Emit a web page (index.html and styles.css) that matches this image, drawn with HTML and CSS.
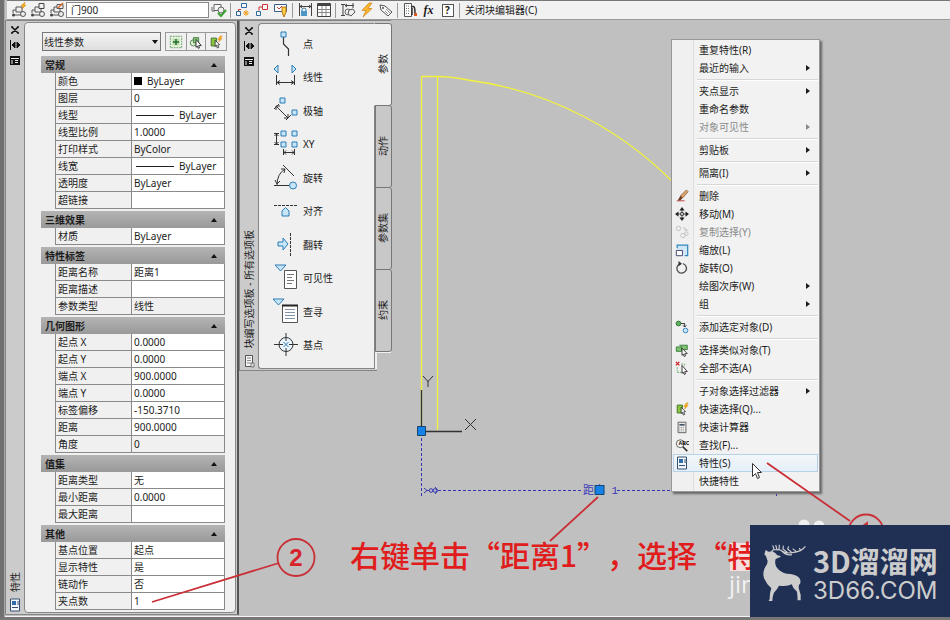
FILE: index.html
```html
<!DOCTYPE html>
<html lang="zh-CN">
<head>
<meta charset="utf-8">
<title>块编辑器</title>
<link rel="stylesheet" href="styles.css">
</head>
<body>
<svg class="defs" aria-hidden="true">
  <symbol id="i-pin" viewBox="0 0 12 12"><path d="M1.500 1v10M3 6h3M6 3L3 6l3 3zM8 3l3 3-3 3z" fill="#111" stroke="#111"/></symbol>
  <symbol id="i-close" viewBox="0 0 12 12"><path d="M3 3l6 6M9 3L3 9M2 3h2M8 3h2M2 9h2M8 9h2" fill="none" stroke="#111" stroke-width="1.600"/></symbol>
  <symbol id="i-menu" viewBox="0 0 12 12"><path d="M1 2h10v9H1z" fill="#111"/><path d="M2 4.500h8M3 6v4M6 6.500h3M6 8.500h3" stroke="#eee"/></symbol>
  <symbol id="i-props" viewBox="0 0 12 14"><path d="M1.500 1h9v12h-9z" fill="#f4f8fc" stroke="#34506e"/><path d="M3 3h4v4H3z" fill="#2f6ca8"/><path d="M8 4h2M8 6h2M3 9.500h6" stroke="#34506e"/></symbol>
  <symbol id="i-qselect" viewBox="0 0 16 16"><path d="M2.500 3.500h6v9h-6z" fill="#8cc63f" stroke="#3a6d20"/><path d="M7 6l5 5-2 .3 1 3-1.500.5-1-3L7 13z" fill="#fff" stroke="#222" stroke-width=".9"/><path d="M13 1l-3 4h2l-1 3 4-4h-2l2-3z" fill="#ffb21a" stroke="#c97a00" stroke-width=".5"/></symbol>
  <symbol id="i-block" viewBox="0 0 16 16"><path d="M5 5h6v5H5zM2 11v-3h3M2 13h9" fill="none" stroke="#555"/><circle cx="12" cy="12" r="2.500" fill="#eee" stroke="#555"/><circle cx="2.500" cy="13" r="1.500" fill="#444"/></symbol>
  <symbol id="i-bolt" viewBox="0 0 16 16"><path d="M10 1L3 8.500h4L4 15l9-8.500H9L13 1z" fill="#ffb62e" stroke="#c78212" stroke-width=".7"/></symbol>
  <symbol id="i-tag" viewBox="0 0 16 16"><path d="M2 3l5 1 7 6-4 4-7-6z" fill="#f8f8f8" stroke="#555"/><circle cx="5" cy="6" r="1" fill="#555"/><path d="M8 7l4 4M7 9l3 3" stroke="#999"/></symbol>
</svg>

<div class="app">
  <svg class="drawing" aria-hidden="true">
    <g fill="none" stroke="#f2f23c" stroke-width="1.300">
      <path d="M421.500 76.500V430M437.500 77V430M421.500 76.500H437"/>
      <path d="M437 76.500Q451 76.500 468 80A354 354 0 0 1 775 431"/>
    </g>
    <g fill="none" stroke="#333">
      <path d="M421.500 390V427M426 431.500H462" stroke-width="1.300"/>
      <path d="M423 376l5 5.500 5-5.500M428 381v6M465 419l11 11M476 419l-11 11"/>
    </g>
    <g fill="none" stroke="#3434b4">
      <path d="M421.500 438V496M438 490.500H582M617 490.500H776M776.500 484V496" stroke-dasharray="3 2"/>
      <path d="M424 488l3 2.500-3 2.500M427 490.500h2M435 487l3 3.500-3 3.500"/><circle cx="431" cy="490.500" r="1.800"/><circle cx="435" cy="490.500" r="1.800"/>
    </g>
    <text x="583" y="494" class="dim">距离 1</text>
    <g fill="#1482e6" stroke="#17456f"><path d="M417.500 426.500h8v9h-8zM595 485.500h9v9h-9z"/></g>
  </svg>

  <header class="toolbar">
    <button aria-label="插入块"><svg viewBox="0 0 16 16"><use href="#i-block"/><path d="M14 0l-4 4h2l-1 3 4-4h-2z" fill="#ffb21a" stroke="#c98000" stroke-width=".5"/></svg></button>
    <button aria-label="编辑块"><svg viewBox="0 0 16 16"><use href="#i-block"/><path d="M9 1.500h5v5H9z" fill="#eee" stroke="#444"/></svg></button>
    <button aria-label="保存块"><svg viewBox="0 0 16 16"><use href="#i-block"/><path d="M8 2.500h6v4H8z" fill="#eee" stroke="#555"/><path d="M9 6l5-5" stroke="#e06b25" stroke-width="1.500"/></svg></button>
    <input class="block-name" aria-label="块名" value="门900">
    <button aria-label="测试块"><svg viewBox="0 0 16 16"><path d="M3 2.500h7v6H3zM1 5v4h3" fill="#f8f8f8" stroke="#666"/><circle cx="10" cy="8" r="3" fill="#eee" stroke="#666"/><path d="M7 11l3 3 5-6" fill="none" stroke="#39a131" stroke-width="2"/></svg></button>
    <hr>
    <button aria-label="自动约束"><svg viewBox="0 0 16 16"><path d="M6.500 1.500h5v4h-5zM1.500 9.500h4v4h-4z" fill="#eef6ff" stroke="#346a9a"/><path d="M6 7.500H3.500V9" fill="none" stroke="#c33"/><path d="M11 8v6M8 11h6M9 9l4 4M13 9l-4 4" stroke="#f0a020"/></svg></button>
    <button aria-label="约束"><svg viewBox="0 0 16 16"><path d="M8.500 2.500h5v5h-5z" fill="#fff" stroke="#c33"/><path d="M2.500 9.500h4v4h-4z" fill="#eef6ff" stroke="#346a9a"/><path d="M5 8.500V5h3" fill="none" stroke="#c33"/></svg></button>
    <button aria-label="显示约束"><svg viewBox="0 0 16 16"><path d="M1.500 2.500h12v7h-12z" fill="#fff" stroke="#345e88"/><path d="M4 5l2 2 3-3" fill="none" stroke="#b44"/><path d="M9 5h4v5l-2 5-2-5z" fill="#ffd24a" stroke="#b87816"/></svg></button>
    <hr>
    <button aria-label="参数约束"><svg viewBox="0 0 16 16"><path d="M2.500 1v13M14.500 1v13M3 4.500h11M5 3L3 4.500 5 6M12 3l2 1.500L12 6" fill="none" stroke="#444"/><path d="M5 9.500V8a2 2 0 0 1 4 0v1.500" fill="none" stroke="#357aa8"/><path d="M4 9h6v5H4z" fill="#4b96c6"/></svg></button>
    <button aria-label="块表"><svg viewBox="0 0 16 16"><path d="M1.500 1.500h13v13h-13z" fill="#fff" stroke="#444"/><path d="M2 3h12" stroke="#444" stroke-width="2"/><path d="M2 7.500h12M2 10.500h12M6 4v10M10 4v10" stroke="#888"/></svg></button>
    <hr>
    <button aria-label="参数"><svg viewBox="0 0 16 16"><path d="M1 2.500h4M3 2.500v11M1 13.500h4M5 3.500h9M7 2L5 3.500 7 5M13 1v5" fill="none" stroke="#444"/><circle cx="8" cy="10" r="3" fill="#eee" stroke="#666"/><path d="M9 8l4-1 2 3-4 4-3-2z" fill="#eee" stroke="#555"/></svg></button>
    <button aria-label="动作"><svg viewBox="0 0 16 16"><use href="#i-bolt"/></svg></button>
    <button aria-label="属性定义"><svg viewBox="0 0 16 16"><use href="#i-tag"/></svg></button>
    <hr>
    <button aria-label="编写选项板"><svg viewBox="0 0 16 16"><path d="M2.500 1.500h7v13h-7z" fill="#fff" stroke="#555"/><path d="M4 4h4M4 6.500h4M4 9h4M4 11.500h4" stroke="#777" stroke-dasharray="1 1"/><path d="M9 5c4-2 4 2 4 7M10 6v7" fill="none" stroke="#333" stroke-width="1.500"/><path d="M12 11h3v3h-3z" fill="#d55a25"/></svg></button>
    <button class="fx">fx</button>
    <button aria-label="了解动态块" class="help"><span>?</span></button>
    <hr>
    <button class="close-editor">关闭块编辑器(C)</button>
  </header>

  <main class="stage">
    <section class="palette properties" aria-label="特性">
      <div class="rail">
        <button aria-label="关闭"><svg><use href="#i-close"/></svg></button>
        <button aria-label="自动隐藏"><svg><use href="#i-pin"/></svg></button>
        <button aria-label="选项"><svg><use href="#i-menu"/></svg></button>
        <span class="rail-title">特性</span>
        <svg class="rail-icon"><use href="#i-props"/></svg>
      </div>
      <div class="panel">
        <div class="picker">
          <select aria-label="对象类型"><option>线性参数</option></select>
          <div class="picker-tools">
            <button aria-label="切换 PICKADD"><svg viewBox="0 0 16 16"><path d="M1.500 1.500h13v13h-13z" fill="#e9f5e4" stroke="#58925a" stroke-dasharray="2 1"/><path d="M4 4h8v8H4z" fill="#b7dba9"/><path d="M8 4.500v7M4.500 8h7" stroke="#226c2b" stroke-width="1.600"/></svg></button>
            <button aria-label="选择对象"><svg viewBox="0 0 16 16"><circle cx="5" cy="9" r="3.500" fill="#e7f4df" stroke="#3d7c3a"/><path d="M5 3h6v6H5z" fill="#8ac47a" stroke="#3d7c3a"/><path d="M8 5l6 7-3 .2 1 2.500-1.500.5-1-2.500L8 14z" fill="#fff" stroke="#222"/></svg></button>
            <button aria-label="快速选择"><svg><use href="#i-qselect"/></svg></button>
          </div>
        </div>

        <section class="group">
          <button class="group-head">常规</button>
          <table>
            <tr><th><label for="p1">颜色</label></th><td><div class="cell"><i class="swatch"></i><input id="p1" value="ByLayer"></div></td></tr>
            <tr><th><label for="p2">图层</label></th><td><input id="p2" value="0"></td></tr>
            <tr><th><label for="p3">线型</label></th><td><div class="cell"><i class="stroke"></i><input id="p3" value="ByLayer"></div></td></tr>
            <tr><th><label for="p4">线型比例</label></th><td><input id="p4" value="1.0000"></td></tr>
            <tr><th>打印样式</th><td class="locked">ByColor</td></tr>
            <tr><th><label for="p5">线宽</label></th><td><div class="cell"><i class="stroke"></i><input id="p5" value="ByLayer"></div></td></tr>
            <tr><th><label for="p6">透明度</label></th><td><input id="p6" value="ByLayer"></td></tr>
            <tr><th><label for="p7">超链接</label></th><td><input id="p7"></td></tr>
          </table>
        </section>
        <section class="group">
          <button class="group-head">三维效果</button>
          <table>
            <tr><th><label for="p8">材质</label></th><td><input id="p8" value="ByLayer"></td></tr>
          </table>
        </section>
        <section class="group">
          <button class="group-head">特性标签</button>
          <table>
            <tr><th><label for="p9">距离名称</label></th><td><input id="p9" value="距离1"></td></tr>
            <tr><th><label for="p10">距离描述</label></th><td><input id="p10"></td></tr>
            <tr><th>参数类型</th><td class="locked">线性</td></tr>
          </table>
        </section>
        <section class="group">
          <button class="group-head">几何图形</button>
          <table>
            <tr><th><label for="p11">起点 X</label></th><td><input id="p11" value="0.0000"></td></tr>
            <tr><th><label for="p12">起点 Y</label></th><td><input id="p12" value="0.0000"></td></tr>
            <tr><th><label for="p13">端点 X</label></th><td><input id="p13" value="900.0000"></td></tr>
            <tr><th><label for="p14">端点 Y</label></th><td><input id="p14" value="0.0000"></td></tr>
            <tr><th><label for="p15">标签偏移</label></th><td><input id="p15" value="-150.3710"></td></tr>
            <tr><th><label for="p16">距离</label></th><td><input id="p16" value="900.0000"></td></tr>
            <tr><th>角度</th><td class="locked">0</td></tr>
          </table>
        </section>
        <section class="group">
          <button class="group-head">值集</button>
          <table>
            <tr><th><label for="p17">距离类型</label></th><td><input id="p17" value="无"></td></tr>
            <tr><th><label for="p18">最小距离</label></th><td><input id="p18" value="0.0000"></td></tr>
            <tr><th><label for="p19">最大距离</label></th><td><input id="p19"></td></tr>
          </table>
        </section>
        <section class="group">
          <button class="group-head">其他</button>
          <table>
            <tr><th><label for="p20">基点位置</label></th><td><input id="p20" value="起点"></td></tr>
            <tr><th><label for="p21">显示特性</label></th><td><input id="p21" value="是"></td></tr>
            <tr><th><label for="p22">链动作</label></th><td><input id="p22" value="否"></td></tr>
            <tr><th><label for="p23">夹点数</label></th><td><input id="p23" value="1"></td></tr>
          </table>
        </section>
      </div>
    </section>

    <section class="palette authoring" aria-label="块编写选项板">
      <div class="rail">
        <button aria-label="关闭"><svg><use href="#i-close"/></svg></button>
        <button aria-label="自动隐藏"><svg><use href="#i-pin"/></svg></button>
        <button aria-label="选项"><svg><use href="#i-menu"/></svg></button>
        <span class="rail-title">块编写选项板 - 所有选项板</span>
        <svg class="rail-icon" viewBox="0 0 12 14"><path d="M2.500 1.500h7v11h-7z" fill="#f4f4f4" stroke="#555"/><path d="M4 4h4M4 6.500h4M4 9h4" stroke="#888"/><path d="M8 9h3v4H8z" fill="#ddd" stroke="#555" stroke-width=".7"/></svg>
      </div>
      <div class="tools">
        <button><svg viewBox="0 0 34 34"><path d="M14.500 9v8l5 5v7" fill="none" stroke="#333" stroke-width="1.200"/><path d="M12 5h5v5h-5z" class="grip"/></svg>点</button>
        <button><svg viewBox="0 0 34 34"><path d="M9 5v8L5 9zM23 5v8l4-4z" class="grip"/><path d="M7.500 15v10M25.500 15v10M8 22.500h17M11 20.500l-3 2 3 2M22 20.500l3 2-3 2" class="ink"/></svg>线性</button>
        <button><svg viewBox="0 0 34 34"><path d="M11 4h5v5h-5zM23 16h5v5h-5z" class="grip"/><path d="M5 15l5-5M17 26l5-5M7 12l12 12M7 16v-4h4M19 20v4h-4" class="ink"/></svg>极轴</button>
        <button><svg viewBox="0 0 34 34"><path d="M12 4h5v5h-5zM23 4h5v5h-5zM12 15h5v5h-5zM23 15h5v5h-5z" class="grip"/><path d="M5 6.500h5M5 17.500h5M7.500 7v10M5.500 9l2-2 2 2M5.500 15l2 2 2-2M14.500 22v6M25.500 22v6M15 25.500h10M17 23.500l-2 2 2 2M23 23.500l2 2-2 2" class="ink"/></svg>XY</button>
        <button><svg viewBox="0 0 34 34"><path d="M5 24.500h20M14 4l11 11M8 24Q8 13 16 8M12 8l4 0-1 4M6 19l2 4 3-3" class="ink"/><circle cx="24" cy="24.500" r="3.500" class="grip"/></svg>旋转</button>
        <button><svg viewBox="0 0 34 34"><path d="M5 11.500h23" class="ink" stroke-dasharray="3 1"/><path d="M13 22v-5l3.500-3.500L20 17v5z" class="grip"/></svg>对齐</button>
        <button><svg viewBox="0 0 34 34"><path d="M21.500 5v23" class="ink" stroke-dasharray="3 1"/><path d="M9 14h5v-4l5 6-5 6v-4H9z" class="grip"/></svg>翻转</button>
        <button><svg viewBox="0 0 34 34"><path d="M15.500 9.500h12v18h-12z" fill="#fff" stroke="#555"/><path d="M18 13.500h7M18 16.500h5M18 19.500h7M18 22.500h5" stroke="#777"/><path d="M6 4h11l-5.500 6z" class="grip"/></svg>可见性</button>
        <button><svg viewBox="0 0 34 34"><path d="M13.500 10.500h15v17h-15z" fill="#fff" stroke="#555"/><path d="M13 10.500h16" stroke="#222" stroke-width="2"/><path d="M16 14.500h10M16 17.500h10M16 20.500h10M16 23.500h10" stroke="#8494a5"/><path d="M4 4h11l-5.500 6z" class="grip"/></svg>查寻</button>
        <button><svg viewBox="0 0 34 34"><circle cx="17" cy="16.500" r="7" fill="#eaf5fc" stroke="#333"/><path d="M17 5v8M17 20v8M5 16.500h9M20 16.500h9" class="ink"/><path d="M14.500 14l5 5M19.500 14l-5 5" stroke="#2d7db5"/></svg>基点</button>
      </div>
      <div class="tabs" role="tablist">
        <button role="tab" aria-selected="true">参数</button>
        <button role="tab">动作</button>
        <button role="tab">参数集</button>
        <button role="tab">约束</button>
      </div>
    </section>
  </main>

  <nav class="context-menu" aria-label="快捷菜单">
    <button>重复特性(R)</button>
    <button class="sub">最近的输入</button>
    <hr>
    <button class="sub">夹点显示</button>
    <button>重命名参数</button>
    <button class="sub" disabled>对象可见性</button>
    <hr>
    <button class="sub">剪贴板</button>
    <hr>
    <button class="sub">隔离(I)</button>
    <hr>
    <button><svg viewBox="0 0 16 16"><path d="M2 13.500h9" stroke="#b33"/><path d="M13 1l2 2-6 7-3-2z" fill="#d9a36b" stroke="#7a4a25" stroke-width=".7"/><path d="M6 8l3 2-3 3H3z" fill="#6d3c22"/></svg>删除</button>
    <button><svg viewBox="0 0 16 16"><path d="M8 0l3 4H5zM8 16l3-4H5zM0 8l4-3v6zM16 8l-4-3v6z" fill="#222"/><path d="M8 3v10M3 8h10" stroke="#333"/><path d="M6.500 6.500h3v3h-3z" fill="#fff" stroke="#222"/></svg>移动(M)</button>
    <button disabled><svg viewBox="0 0 16 16" fill="none" stroke="#bbb"><circle cx="4" cy="4" r="2.500"/><circle cx="9" cy="12" r="2.500"/><circle cx="13" cy="10" r="2"/><path d="M9 3q4 0 4 4M11 5l2 2 2-2"/></svg>复制选择(Y)</button>
    <button><svg viewBox="0 0 16 16"><path d="M2.500 6V2.500h12v12H11" fill="#cfe7f7" stroke="#2f86bd" stroke-width="1.400"/><path d="M1.500 8.500h7v6h-7z" fill="#fff" stroke="#336"/></svg>缩放(L)</button>
    <button><svg viewBox="0 0 16 16"><path d="M5 3.500A5.500 5.500 0 1 0 9 3" fill="none" stroke="#555" stroke-width="1.600"/><path d="M4 0l4 3-4 3z" fill="#333"/></svg>旋转(O)</button>
    <button class="sub">绘图次序(W)</button>
    <button class="sub">组</button>
    <hr>
    <button><svg viewBox="0 0 16 16"><circle cx="4" cy="4" r="2.700" fill="#5aaf58" stroke="#226b2d"/><path d="M7 4h4v4M9 6l2 2 2-2" fill="none" stroke="#222"/><circle cx="12" cy="12" r="2.700" fill="#c3e4fa" stroke="#287cb9"/></svg>添加选定对象(D)</button>
    <hr>
    <button><svg viewBox="0 0 16 16"><path d="M1.500 4.500h6v5h-6zM5 2.500h9v5H9" fill="#83c174" stroke="#2d7933"/><path d="M8 6l6 6-3 .3 1 2.500-1.500.5-1-2.500L8 14z" fill="#fff" stroke="#222"/></svg>选择类似对象(T)</button>
    <button><svg viewBox="0 0 16 16"><path d="M1 1l4 4M5 1L1 5" stroke="#c22" stroke-width="1.500"/><path d="M7 3.500h4V6M2.500 7v6H9" fill="none" stroke="#5aa35b" stroke-dasharray="2 1"/><path d="M8 5l6 7-3 .3 1 2.500-1.500.5-1-2.500L8 14z" fill="#fff" stroke="#222"/></svg>全部不选(A)</button>
    <hr>
    <button class="sub">子对象选择过滤器</button>
    <button><svg><use href="#i-qselect"/></svg>快速选择(Q)...</button>
    <button><svg viewBox="0 0 16 16"><path d="M3.500 2.500h9v12h-9z" fill="#eee" stroke="#555"/><path d="M5 5.500h6" stroke="#456" stroke-width="2"/><path d="M5 8.500h6M5 10.500h6M5 12.500h6" stroke="#777" stroke-dasharray="1 1"/></svg>快速计算器</button>
    <button><svg viewBox="0 0 16 16"><circle cx="6" cy="6.500" r="4.500" fill="#f8f8f8" stroke="#555"/><path d="M9 10l5 5" stroke="#333" stroke-width="2"/><text x="4" y="8" class="abc">ABC</text></svg>查找(F)...</button>
    <button class="hot"><svg><use href="#i-props"/></svg>特性(S)</button>
    <button>快捷特性</button>
  </nav>

  <svg class="notes" aria-hidden="true">
    <path d="M752.500 463.500v13l3-3 2 5 2-1-2-5h4z" fill="#fff" stroke="#333"/>
    <g fill="none" stroke="#c92f36" stroke-width="1.800">
      <path d="M152 602L279 563M550 541L598 497M767 463L850 521"/>
      <circle cx="296" cy="557.500" r="18.500"/><circle cx="866" cy="532" r="17.500"/>
      <path d="M863 526l4-3v6"/>
    </g>
    <path d="M730 543h26v28h-26z" fill="#f5dede"/>
    <circle cx="804" cy="525" r="5.500" fill="#f0f0f0"/><circle cx="819" cy="526" r="5.500" fill="#f0f0f0"/>
    <text x="296" y="566" class="step">2</text>
    <text x="350" y="567" class="note">右键单击“距离1”，选择“特</text>
    <text x="729" y="593" class="site">jin</text>
  </svg>

  <aside class="brand">
    <svg viewBox="185 130 135 178" aria-hidden="true">
      <path d="M196 150q4 2 8 5l12-1q10 4 15 12l10 2-1 3-14 6q-5 14 4 26 10 14 30 18 24 1 34 10 8 6 6 19-6 4-5 14l6 20v17h-10l1-5-2-21q-12-8-16-22-14 8-38 4-6 12-14 20-5 8-6 26h-11l3-6q0-20 5-32-14-12-22-30-6-18 5-36 6-8 6-16l-5-14-5-6z" fill="#ccc"/>
      <path d="M213 157q4-9 10-8l18 1M222 150l-5-14M230 149l-4-14M236 149l1-15M241 150q12 12 35 8 28-3 39-19M262 158l-14-11 1-10M275 158l-13-11 3-8M288 155l-11-9M300 151l-3-7M246 154q10 13 29 10" fill="none" stroke="#ccc" stroke-width="3.500"/>
    </svg>
    <div class="brand-text"><strong>3D溜溜网</strong><span>3D66.COM</span></div>
  </aside>
</div>
</body>
</html>
```
FILE: styles.css
```css
* { box-sizing: border-box; }

body {
  margin: 0;
  font: 10px/16px "Noto Sans", "Noto Sans CJK SC", sans-serif;
  color: #1c1c1c;
  background: #c0c0c0;
}

button, input, select {
  font: inherit;
  color: inherit;
  margin: 0;
  padding: 0;
  border: 0;
  border-radius: 0;
  background: none;
}

hr { margin: 0; border: 0; }

.defs { position: absolute; width: 0; height: 0; }

.app {
  position: relative;
  display: flex;
  flex-direction: column;
  min-height: 100vh;
  padding-left: 5px;
  overflow: hidden;
  background: linear-gradient(to right, #707070 4px, #a8a8a8 4px, #a8a8a8 5px, #c0c0c0 5px);
  border-bottom: 3px solid #777;
}

.drawing, .notes {
  position: absolute;
  inset: 0;
  width: 100%;
  height: 100%;
  pointer-events: none;
}

.notes { z-index: 3; }

/* Toolbar */
.toolbar {
  position: relative;
  display: flex;
  align-items: center;
  height: 20px;
  margin-left: 2px;
  padding-left: 2px;
  background: #f1f1f1;
  border-top: 1px solid #777;
  border-bottom: 1px solid #999;
}

.toolbar button { flex: none; width: 19px; height: 18px; display: grid; place-items: center; }
.toolbar svg { width: 16px; height: 16px; }
.toolbar hr { width: 1px; height: 15px; margin: 0 2px; background: #9a9a9a; }
.block-name { width: 143px; height: 16px; padding: 0 4px; background: #fff; border: 1px solid #888; }
.toolbar .fx { font: italic bold 12px/16px "Liberation Serif", serif; }
.help span { width: 12px; height: 13px; border: 1px solid #555; background: #fff; font-weight: 700; line-height: 11px; }
.toolbar .close-editor { width: auto; padding-left: 3px; }

/* Palettes */
.stage {
  position: relative;
  flex: 1;
  display: flex;
  align-items: flex-start;
  border-bottom: 1px solid #f4f4f4;
}

.palette { display: flex; background: #cbcbcb; border: 1px solid #858585; }
.properties { width: 234px; padding: 1px 1px 1px 0; border-right: 2px solid #555; }

.rail { display: flex; flex-direction: column; align-items: center; width: 18px; }
.rail button { height: 15px; display: grid; place-items: center; }
.rail button svg { width: 12px; height: 12px; }
.rail-title, .tabs button { writing-mode: vertical-rl; text-orientation: sideways; transform: rotate(180deg); }
.rail-title { margin-top: auto; line-height: 14px; }
.rail-icon { width: 12px; height: 14px; margin: 6px 0 1px; }

.panel { flex: 1; padding: 9px 10px 2px 16px; background: #f0f0f0; border: 1px solid #888; border-radius: 4px; }
.picker { position: relative; display: flex; gap: 4px; margin: 0 -2px 5px 0; }
.picker select {
  appearance: none;
  flex: 1;
  height: 19px;
  margin-left: 1px;
  padding-left: 1px;
  border: 1px solid #777;
  background: linear-gradient(#f4f4f4, #dedede);
}
.picker::after {
  content: "";
  position: absolute;
  right: 69px;
  top: 8px;
  border: 3px solid transparent;
  border-top: 4px solid #111;
  border-bottom: 0;
  pointer-events: none;
}
.picker-tools { display: flex; border: 1px solid #999; }
.picker-tools button { display: grid; place-items: center; width: 20px; height: 17px; }
.picker-tools button:nth-child(2) { border: solid #999; border-width: 0 1px; }
.picker-tools svg { width: 14px; height: 14px; }

.group + .group { margin-top: 2px; }
.group-head {
  display: flex;
  align-items: center;
  justify-content: space-between;
  width: 100%;
  height: 17px;
  padding: 0 8px 0 4px;
  background: linear-gradient(#b4b4b4, #999);
  font-weight: 700;
  line-height: 16px;
}
.group-head::after { content: ""; border: 3px solid transparent; border-bottom: 4px solid #111; border-top: 0; }

.group table { width: calc(100% - 14px); margin-left: 14px; border-spacing: 0; border-left: 1px solid #8a8a8a; table-layout: fixed; }
.group th, .group td { height: 17px; padding: 0 2px; border: solid #8a8a8a; border-width: 0 1px 1px 0; text-align: left; font-weight: 400; line-height: 16px; }
.group th { width: 76px; }
.group td { background: #fff; }
.group td.locked { background: #f0f0f0; }
.group input, .group label { display: block; width: 100%; height: 16px; }
.cell { display: flex; align-items: center; gap: 5px; height: 16px; }
.swatch { flex: none; width: 8px; height: 8px; background: #000; }
.stroke { flex: none; width: 38px; height: 1px; margin-left: 2px; background: #222; }

.authoring { position: relative; margin-bottom: 10px; padding: 2px 0 1px; border-right: 0; width: 152px; }
.authoring::after { content: ""; position: absolute; left: 137px; right: 0; bottom: -1px; height: 18px; background: #c0c0c0; }
.tools {
  display: grid;
  grid-auto-rows: 1fr;
  flex: 1;
  height: 346px;
  padding: 3px 0 6px 10px;
  background: #f0f0f0;
  border: 1px solid #858585;
  border-right: 0;
  border-radius: 4px 0 0 3px;
}
.tools button { display: flex; align-items: center; min-height: 0; }
.tools svg { width: 34px; height: 34px; }
.grip { fill: #c6e5f8; stroke: #2d7db5; }
.ink { fill: none; stroke: #333; }

.tabs { display: flex; flex-direction: column; width: 17px; border-left: 1px solid #858585; background: #f0f0f0; }
.tabs button { height: 83px; width: 17px; margin-bottom: -1px; background: #c8c8c8; border: 1px solid #777; border-radius: 3px 0 0 3px; text-align: center; line-height: 15px; }
.tabs button[aria-selected] { width: 18px; margin-left: -1px; background: #f0f0f0; border-right-color: #f0f0f0; }

/* Context menu */
.context-menu {
  position: absolute;
  z-index: 2;
  left: 671px;
  top: 39px;
  width: 149px;
  padding: 1px;
  border: 1px solid #989898;
  background: linear-gradient(to right, #f0f0f0 21px, #dedede 21px, #dedede 22px, #f2f2f2 22px);
  box-shadow: 2px 2px 2px #666;
}
.context-menu button {
  position: relative;
  display: block;
  width: 100%;
  height: 18px;
  padding-left: 26px;
  line-height: 18px;
  text-align: left;
}
.context-menu hr { height: 5px; margin-left: 24px; background: linear-gradient(transparent 2px, #d6d6d6 2px, #d6d6d6 3px, #fff 3px, #fff 4px, transparent 4px); }
.context-menu svg { position: absolute; left: 2px; top: 2px; width: 14px; height: 14px; }
.context-menu button:disabled { color: #8a8a8a; }
.sub::after {
  content: "";
  position: absolute;
  right: 8px;
  top: 6px;
  border: 3px solid transparent;
  border-left: 4px solid currentColor;
  border-right: 0;
}
.context-menu .hot { background: linear-gradient(#f2f7fb, #e5eff8); box-shadow: inset 0 0 0 1px #b5d2e8; }
.abc { font: bold 6px "Liberation Sans", sans-serif; }

/* Drawing text and notes */
.dim { font: 11px "Liberation Mono", "Noto Sans CJK SC", monospace; fill: #3a3ab8; }
.note { font: 500 30px "Noto Sans CJK SC", sans-serif; fill: #e01c1c; text-spacing-trim: space-all; }
.step { font: bold 24px "Liberation Sans", sans-serif; fill: #d8232a; text-anchor: middle; }
.site { font: 24px "Open Sans", sans-serif; fill: #f2f2f2; }

.brand {
  position: absolute;
  z-index: 4;
  right: 0;
  bottom: -3px;
  display: flex;
  gap: 6px;
  width: 200px;
  height: 95px;
  padding: 18px 0 0 12px;
  background: #203055;
  color: #ccc;
}
.brand svg { flex: none; width: 45px; height: 60px; }
.brand-text { display: flex; flex-direction: column; white-space: nowrap; }
.brand strong { font: 700 29px/34px "Noto Sans CJK SC", sans-serif; }
.brand span { font: 24px/28px Inter, sans-serif; }
```
